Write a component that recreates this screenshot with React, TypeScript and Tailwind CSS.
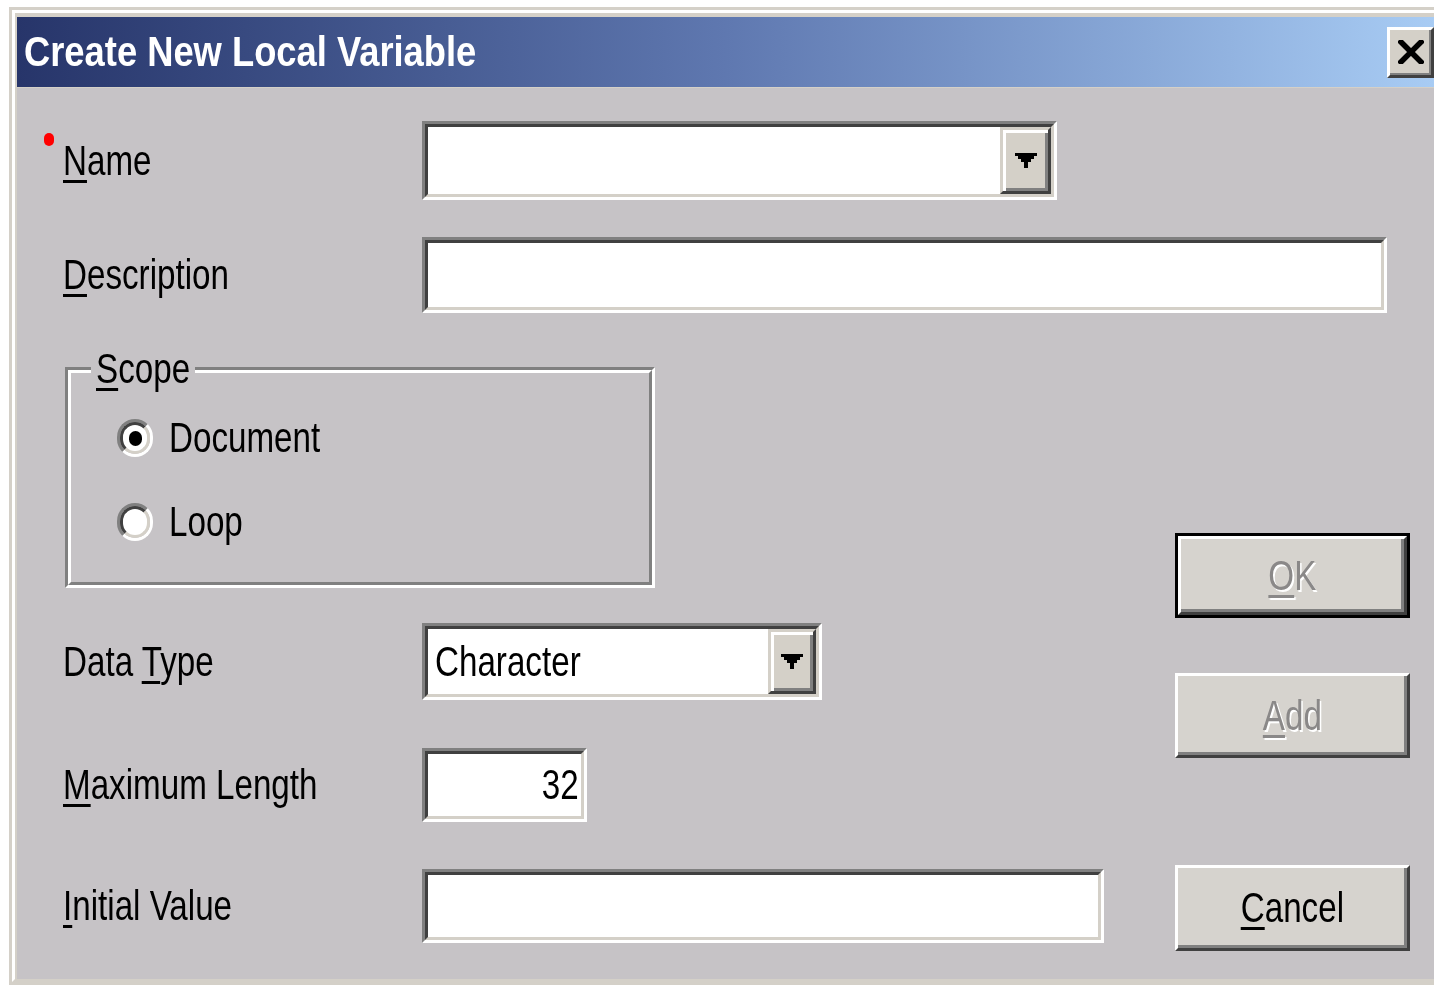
import type { ReactNode } from "react";

// Classic Win9x/2000 dialog: "Create New Local Variable"

const Squeeze = ({
  children,
  className = "",
}: {
  children: ReactNode;
  className?: string;
}) => <span className={`inline-block scale-x-[0.79] ${className}`}>{children}</span>;

// one letter underlined (keyboard mnemonic)
const Mnemonic = ({ text, index = 0 }: { text: string; index?: number }) => (
  <>
    {text.slice(0, index)}
    <span className="underline decoration-[3px] underline-offset-[5px]">
      {text[index]}
    </span>
    {text.slice(index + 1)}
  </>
);

const Sunken = ({
  className,
  children,
}: {
  className: string;
  children?: ReactNode;
}) => (
  <div
    className={`border-[3px] border-t-[#808080] border-l-[#808080] border-b-white border-r-white ${className}`}
  >
    <div className="flex h-full w-full items-center border-[3px] border-t-[#404040] border-l-[#404040] border-b-[#d4d0c8] border-r-[#d4d0c8] bg-white">
      {children}
    </div>
  </div>
);

const DropArrow = ({ className }: { className: string }) => (
  <div
    className={`flex h-full items-center justify-center border-[3px] border-t-[#d4d0c8] border-l-[#d4d0c8] border-b-[#404040] border-r-[#404040] bg-[#d4d0c8] shadow-[inset_3px_3px_0_#fff,inset_-3px_-3px_0_#808080] ${className}`}
  >
    <svg width="22" height="15" viewBox="0 0 22 15">
      <path d="M0 0H22V3H19V6H16V9H13V15H9V9H6V6H3V3H0Z" fill="#000" />
    </svg>
  </div>
);

const Radio = ({ checked }: { checked?: boolean }) => (
  <div className="h-[38px] w-[36px] shrink-0 rounded-full border-[3px] border-t-[#808080] border-l-[#808080] border-b-white border-r-white">
    <div className="flex h-full w-full items-center justify-center rounded-full border-[3px] border-t-[#404040] border-l-[#404040] border-b-[#d4d0c8] border-r-[#d4d0c8] bg-white">
      {checked && <div className="h-[15px] w-[13px] rounded-full bg-black" />}
    </div>
  </div>
);

const WinButton = ({
  label,
  disabled,
  isDefault,
  className,
}: {
  label: string;
  disabled?: boolean;
  isDefault?: boolean;
  className: string;
}) => {
  const face = (
    <div className="flex h-full w-full items-center justify-center border-[3px] border-t-white border-l-white border-b-[#404040] border-r-[#404040] bg-[#d6d3ce] shadow-[inset_-3px_-3px_0_#808080]">
      <Squeeze
        className={
          disabled
            ? "origin-center text-[#8a8888] [text-shadow:2px_2px_0_#fff]"
            : "origin-center text-black"
        }
      >
        <Mnemonic text={label} />
      </Squeeze>
    </div>
  );
  return isDefault ? (
    <div className={`border-[3px] border-black ${className}`}>{face}</div>
  ) : (
    <div className={className}>{face}</div>
  );
};

const FieldRow = ({
  label,
  index,
  height,
  className = "",
  children,
}: {
  label: string;
  index?: number;
  height: string;
  className?: string;
  children: ReactNode;
}) => (
  <div className={`flex items-center ${height} ${className}`}>
    <div className="w-[359px] shrink-0">
      <Squeeze className="origin-left">
        <Mnemonic text={label} index={index} />
      </Squeeze>
    </div>
    {children}
  </div>
);

export default function App() {
  return (
    <div className="h-[989px] w-[1434px] overflow-hidden bg-white pl-[9px] pt-[7px] font-['Liberation_Sans',Arial,sans-serif] text-[42px] leading-none text-black">
      <div className="h-[978px] w-[1432px] border-[3px] border-[#d4d0c8]">
        <div className="flex h-full flex-col border-[3px] border-t-white border-l-white border-b-[#d4d0c8] border-r-[#d4d0c8] bg-[#d4d0c8] pl-[2px] pt-[4px]">
          {/* title bar */}
          <div className="flex h-[70px] shrink-0 items-center justify-between bg-linear-to-r from-[#27356a] via-[#5f78b0] to-[#a8ccf4] pl-[7px] pr-[1px]">
            <span className="inline-block origin-left scale-x-[0.865] font-bold text-white">
              Create New Local Variable
            </span>
            <div className="flex h-[51px] w-[47px] items-center justify-center border-[3px] border-t-white border-l-white border-b-[#404040] border-r-[#404040] bg-[#d4d0c8] shadow-[inset_-2px_-2px_0_#808080]">
              <svg width="26" height="24" viewBox="0 0 26 24">
                <path
                  d="M3 2L23 22M23 2L3 22"
                  stroke="#000"
                  strokeWidth="5.5"
                  strokeLinecap="square"
                />
              </svg>
            </div>
          </div>

          {/* client area */}
          <div className="mt-[1px] flex-1 bg-[#c6c3c6] pl-[46px] pt-[33px]">
            <FieldRow label="Name" height="h-[79px]" className="relative">
              <span className="absolute -left-[19px] top-[12px] h-[13px] w-[10px] rounded-full bg-[#ff0000]" />
              <Sunken className="h-full w-[635px]">
                <div className="flex-1" />
                <DropArrow className="w-[51px]" />
              </Sunken>
            </FieldRow>

            <FieldRow label="Description" height="h-[76px]" className="mt-[37px]">
              <Sunken className="h-full w-[965px]" />
            </FieldRow>

            <div className="flex">
              <div className="w-[1112px] shrink-0">
                {/* scope group */}
                <div className="relative ml-[2px] mt-[54px] h-[221px] w-[590px] border-[3px] border-t-[#808080] border-l-[#808080] border-b-white border-r-white">
                  <div className="flex h-full flex-col gap-[34px] border-[3px] border-t-white border-l-white border-b-[#808080] border-r-[#808080] pl-[46px] pt-[40px]">
                    <div className="flex h-[50px] items-center gap-[16px]">
                      <Radio checked />
                      <Squeeze className="origin-left">Document</Squeeze>
                    </div>
                    <div className="flex h-[50px] items-center gap-[16px]">
                      <Radio />
                      <Squeeze className="origin-left">Loop</Squeeze>
                    </div>
                  </div>
                  <div className="absolute -top-[22px] left-[23px] bg-[#c6c3c6] px-[5px]">
                    <Squeeze className="-mr-[25px] origin-left">
                      <Mnemonic text="Scope" />
                    </Squeeze>
                  </div>
                </div>

                <FieldRow label="Data Type" index={5} height="h-[77px]" className="mt-[35px]">
                  <Sunken className="h-full w-[400px]">
                    <div className="flex-1 pl-[7px]">
                      <Squeeze className="origin-left">Character</Squeeze>
                    </div>
                    <DropArrow className="w-[48px]" />
                  </Sunken>
                </FieldRow>

                <FieldRow label="Maximum Length" height="h-[74px]" className="mt-[48px]">
                  <Sunken className="h-full w-[165px]">
                    <div className="flex-1 pr-[2px] text-right">
                      <Squeeze className="origin-right">32</Squeeze>
                    </div>
                  </Sunken>
                </FieldRow>

                <FieldRow label="Initial Value" height="h-[74px]" className="mt-[47px]">
                  <Sunken className="h-full w-[682px]" />
                </FieldRow>
              </div>

              {/* buttons */}
              <div className="flex w-[235px] shrink-0 flex-col pt-[220px]">
                <WinButton label="OK" disabled isDefault className="h-[85px]" />
                <WinButton label="Add" disabled className="mt-[55px] h-[85px]" />
                <WinButton label="Cancel" className="mt-[107px] h-[86px]" />
              </div>
            </div>
          </div>
        </div>
      </div>
    </div>
  );
}
